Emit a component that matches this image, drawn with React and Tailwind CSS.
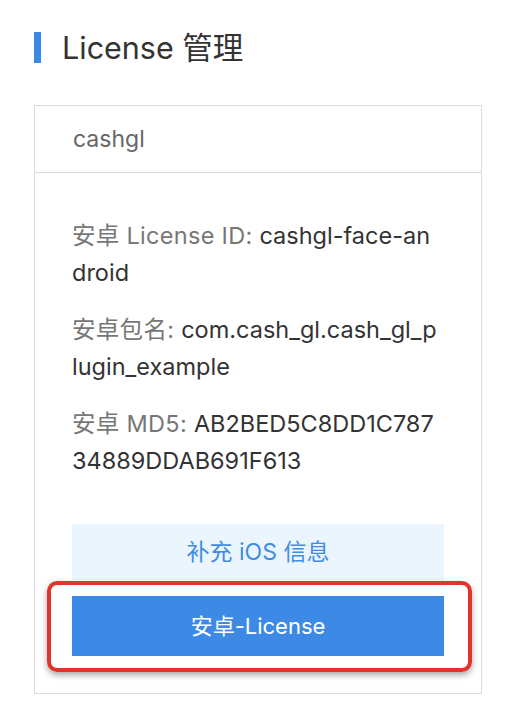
import React from 'react';

const rows = [
    { label: '安卓 License ID: ', value: 'cashgl-face-android' },
    { label: '安卓包名: ', value: 'com.cash_gl.cash_gl_plugin_example' },
    { label: '安卓 MD5: ', value: 'AB2BED5C8DD1C78734889DDAB691F613' },
];

export default function App() {
    return (
        <div
            className="min-h-[722px] bg-white px-[34px] pt-[32px]"
            style={{ fontFamily: 'Inter, "Noto Sans CJK SC", sans-serif' }}
        >
            {/* 标题 */}
            <div className="flex items-center gap-[21px]">
                <div className="h-[31px] w-[7px] bg-[#3a8ae4]" />
                <h1 className="text-[30.5px] leading-[31px] text-[#333]">License 管理</h1>
            </div>

            {/* 卡片 */}
            <div className="mt-[42px] w-[448px] border border-[#dcdcdc]">
                <div className="flex h-[67px] items-center border-b border-[#dcdcdc] px-[38px] text-[23px] text-[#666]">
                    cashgl
                </div>
                <div className="px-[37px] pb-[37px] pt-[44px]">
                    <div className="flex flex-col gap-[20px] pr-[2px]">
                        {rows.map((row) => (
                            <p key={row.label} className="break-all text-[23.5px] leading-[37px]">
                                <span className="tracking-[0.3px] text-[#777]">{row.label}</span>
                                <span className="text-[#333]">{row.value}</span>
                            </p>
                        ))}
                    </div>

                    <button className="mt-[45px] flex h-[56px] w-full items-center justify-center bg-[#ebf5fe] text-[23px] text-[#3f8de2]">
                        补充 iOS 信息
                    </button>

                    <div className="relative mt-[16px]">
                        <button className="flex h-[60px] w-full items-center justify-center bg-[#3c8ae5] text-[22px] text-white">
                            安卓-License
                        </button>
                        {/* 标注框 */}
                        <div className="pointer-events-none absolute -bottom-[16px] -left-[25px] -right-[28px] -top-[15px] rounded-[10px] border-[4px] border-[#e3342b] shadow-[0_3px_6px_rgba(0,0,0,0.35)]" />
                    </div>
                </div>
            </div>
        </div>
    );
}
